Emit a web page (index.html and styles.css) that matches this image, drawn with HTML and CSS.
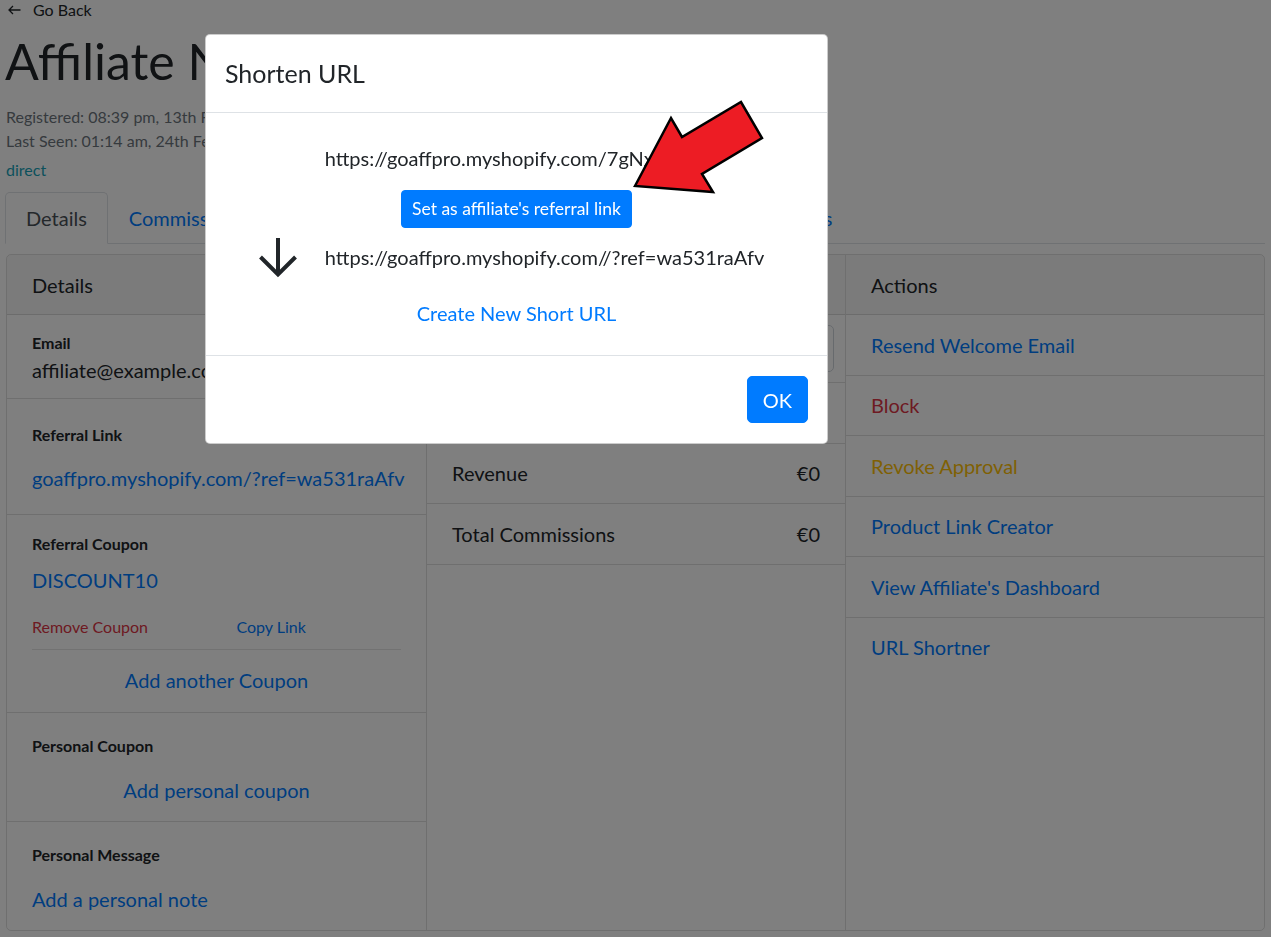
FILE: index.html
```html
<!DOCTYPE html>
<html lang="en">
<head>
<meta charset="utf-8">
<title>Affiliate Name</title>
<link rel="stylesheet" href="styles.css">
</head>
<body>
<div class="page">
  <a class="back" href="#">
    <svg class="back-icon" viewBox="0 0 13 10" width="13" height="10"><path d="M1 5H12.5M5 1L1 5L5 9" fill="none" stroke="#212529" stroke-width="1.3"/></svg>
    <span>Go Back</span>
  </a>
  <h1 class="title">Affiliate Name</h1>
  <div class="meta">Registered: 08:39 pm, 13th February 2020</div>
  <div class="meta">Last Seen: 01:14 am, 24th February 2020</div>
  <div class="source">direct</div>

  <ul class="tabs">
    <li class="tab active">Details</li>
    <li class="tab">Commissions</li>
    <li class="tab">Orders</li>
    <li class="tab">Payments</li>
    <li class="tab">Analytics</li>
    <li class="tab">Creatives</li>
    <li class="tab">Payouts</li>
  </ul>

  <div class="card">
    <section class="col">
      <div class="col-head">Details</div>
      <div class="sec sec-email">
        <div class="label">Email</div>
        <div class="value">affiliate@example.com</div>
      </div>
      <div class="sec sec-link">
        <div class="label-row">
          <span class="label">Referral Link</span>
          <a class="btn-link" href="#">Change Referral Link</a>
        </div>
        <a class="value-link" href="#">goaffpro.myshopify.com/?ref=wa531raAfv</a>
      </div>
      <div class="sec sec-coupon">
        <div class="label">Referral Coupon</div>
        <a class="value-link coupon-code" href="#">DISCOUNT10</a>
        <div class="coupon-actions">
          <a class="danger" href="#">Remove Coupon</a>
          <a class="copy" href="#">Copy Link</a>
        </div>
        <hr class="divider">
        <a class="center-link add-another" href="#">Add another Coupon</a>
      </div>
      <div class="sec sec-pcoupon">
        <div class="label">Personal Coupon</div>
        <a class="center-link after-label" href="#">Add personal coupon</a>
      </div>
      <div class="sec sec-pmsg">
        <div class="label">Personal Message</div>
        <a class="value-link after-label" href="#">Add a personal note</a>
      </div>
    </section>

    <section class="col">
      <div class="col-head">Statistics</div>
      <div class="filter">
        <div class="select">Lifetime</div>
      </div>
      <ul class="stats">
        <li><span>Orders</span><span>0</span></li>
        <li><span>Revenue</span><span>€0</span></li>
        <li><span>Total Commissions</span><span>€0</span></li>
      </ul>
    </section>

    <section class="col">
      <div class="col-head">Actions</div>
      <ul class="actions">
        <li><a href="#">Resend Welcome Email</a></li>
        <li><a class="danger" href="#">Block</a></li>
        <li><a class="warning" href="#">Revoke Approval</a></li>
        <li><a href="#">Product Link Creator</a></li>
        <li><a href="#">View Affiliate's Dashboard</a></li>
        <li><a href="#">URL Shortner</a></li>
      </ul>
    </section>
  </div>
</div>

<div class="backdrop"></div>

<div class="modal">
  <div class="modal-header">
    <h5 class="modal-title">Shorten URL</h5>
  </div>
  <div class="modal-body">
    <div class="url">https://goaffpro.myshopify.com/7gNxW2kR</div>
    <button class="btn-set" type="button">Set as affiliate's referral link</button>
    <div class="result-row">
      <svg class="down-icon" viewBox="0 0 40 40" width="40" height="40"><path d="M20 1V36M2.5 20L20 37.5L37.5 20" fill="none" stroke="#212529" stroke-width="4"/></svg>
      <div class="url">https://goaffpro.myshopify.com//?ref=wa531raAfv</div>
    </div>
    <a class="create-link" href="#">Create New Short URL</a>
  </div>
  <div class="modal-footer">
    <button class="btn-ok" type="button">OK</button>
  </div>
  <svg class="annot" viewBox="0 0 132 94" width="132" height="94"><polygon points="2,86 38,18 49,37 108,2 129,38 69,74 80,92" fill="#ed1c24" stroke="#000" stroke-width="2.5" stroke-linejoin="miter"/></svg>
</div>
</body>
</html>
```

FILE: styles.css
```css
* { box-sizing: border-box; }

html, body {
  margin: 0;
  height: 100%;
  overflow: hidden;
}

body {
  font-family: Lato, "Open Sans", sans-serif;
  font-size: 20px;
  line-height: 30px;
  color: #212529;
  background: #fff;
}

a { color: #007bff; text-decoration: none; }

ul { list-style: none; margin: 0; padding: 0; }

.page { padding: 0 6px; }

/* header */
.back {
  display: flex;
  align-items: center;
  gap: 12px;
  height: 20px;
  padding-left: 2px;
  font-size: 16px;
  line-height: 20px;
  color: #212529;
}

.title {
  margin: 11px 0 14px -1px;
  font-size: 50px;
  line-height: 60px;
  font-weight: 400;
}

.meta {
  font-size: 16px;
  line-height: 24px;
  color: #6c757d;
}

.source {
  margin-top: 5px;
  font-size: 16px;
  line-height: 24px;
  color: #17a2b8;
}

/* tabs */
.tabs {
  display: flex;
  margin: 10px 0 0 -1px;
  border-bottom: 1px solid #dee2e6;
}

.tab {
  padding: 10px 20px;
  margin-bottom: -1px;
  border: 1px solid transparent;
  border-radius: 5px 5px 0 0;
  color: #007bff;
  line-height: 30px;
}

.tab.active {
  color: #495057;
  background: #fff;
  border-color: #dee2e6 #dee2e6 #fff;
}

/* card */
.card {
  margin-top: 10px;
  display: grid;
  grid-template-columns: repeat(3, 1fr);
  border: 1px solid rgba(0,0,0,.125);
  border-radius: 5px;
  overflow: hidden;
}

.col { min-width: 0; }
.col + .col { border-left: 1px solid rgba(0,0,0,.125); }

.col-head {
  padding: 14.5px 25px;
  line-height: 30px;
  background: rgba(0,0,0,.03);
  border-bottom: 1px solid rgba(0,0,0,.125);
}

.sec {
  padding-left: 25px;
  padding-right: 25px;
  border-bottom: 1px solid rgba(0,0,0,.125);
}
.sec:last-child { border-bottom: 0; }

.label {
  font-size: 16px;
  line-height: 24px;
  font-weight: 700;
}

.value { white-space: nowrap; }

.sec-email { padding-top: 16px; padding-bottom: 13px; }
.sec-link { padding-top: 17px; padding-bottom: 21px; }
.sec-coupon { padding-top: 17px; padding-bottom: 17px; }
.sec-pcoupon { padding-top: 21px; padding-bottom: 16px; }
.sec-pmsg { padding-top: 21px; padding-bottom: 16px; }

.label-row {
  display: flex;
  align-items: center;
  justify-content: space-between;
  height: 38px;
}

.btn-link {
  font-size: 17.5px;
  line-height: 26px;
  padding: 5px 10px;
}

.value-link { display: block; margin-top: 9px; white-space: nowrap; }
.after-label { margin-top: 17px; }

.coupon-actions {
  display: grid;
  grid-template-columns: 1fr 1fr;
  margin-top: 20px;
  font-size: 16px;
  line-height: 24px;
}
.copy { padding-left: 20px; }

.danger { color: #dc3545; }
.warning { color: #ffc107; }

.divider {
  margin: 10px 0 0;
  border: 0;
  border-top: 1px solid rgba(0,0,0,.1);
}

.center-link { display: block; text-align: center; }
.add-another { margin-top: 15px; }

/* stats */
.filter {
  padding: 10px 11px;
  border-bottom: 1px solid rgba(0,0,0,.125);
}

.select {
  height: 47px;
  padding: 7.5px 15px;
  border: 1px solid #ced4da;
  border-radius: 5px;
  color: #495057;
}

.stats li {
  display: flex;
  justify-content: space-between;
  padding: 14.75px 25px;
  line-height: 30px;
  border-bottom: 1px solid rgba(0,0,0,.125);
}

/* actions */
.actions li {
  padding: 14.75px 25px;
  line-height: 30px;
  border-bottom: 1px solid rgba(0,0,0,.125);
}
.actions li:last-child { border-bottom: 0; }

/* modal */
.backdrop {
  position: fixed;
  inset: 0;
  background: rgba(0,0,0,.5);
}

.modal {
  position: fixed;
  top: 34px;
  left: 205px;
  width: 623px;
  background: #fff;
  border: 1px solid rgba(0,0,0,.2);
  border-radius: 5px;
}

.modal-header {
  padding: 20px 19px;
  border-bottom: 1px solid #dee2e6;
}

.modal-title {
  margin: 0;
  font-size: 25px;
  line-height: 37px;
  font-weight: 400;
}

.modal-body {
  display: flex;
  flex-direction: column;
  align-items: center;
  padding: 30px 20px 27px;
}

.url { line-height: 30px; white-space: nowrap; }

.btn-set {
  margin-top: 17px;
  padding: 5px 10px;
  font-family: inherit;
  font-size: 17.5px;
  line-height: 26px;
  color: #fff;
  background: #007bff;
  border: 1px solid #007bff;
  border-radius: 4px;
}

.result-row {
  display: flex;
  align-items: center;
  gap: 27px;
  height: 40px;
  margin-top: 9px;
  padding-right: 11px;
}

.down-icon { overflow: visible; flex: none; }

.create-link { margin-top: 21px; line-height: 30px; }

.modal-footer {
  display: flex;
  justify-content: flex-end;
  padding: 20px 19px;
  border-top: 1px solid #dee2e6;
}

.btn-ok {
  padding: 7.5px 15px;
  font-family: inherit;
  font-size: 20px;
  line-height: 30px;
  color: #fff;
  background: #007bff;
  border: 1px solid #007bff;
  border-radius: 5px;
}

.annot {
  position: absolute;
  left: 427px;
  top: 65px;
  overflow: visible;
}
```
